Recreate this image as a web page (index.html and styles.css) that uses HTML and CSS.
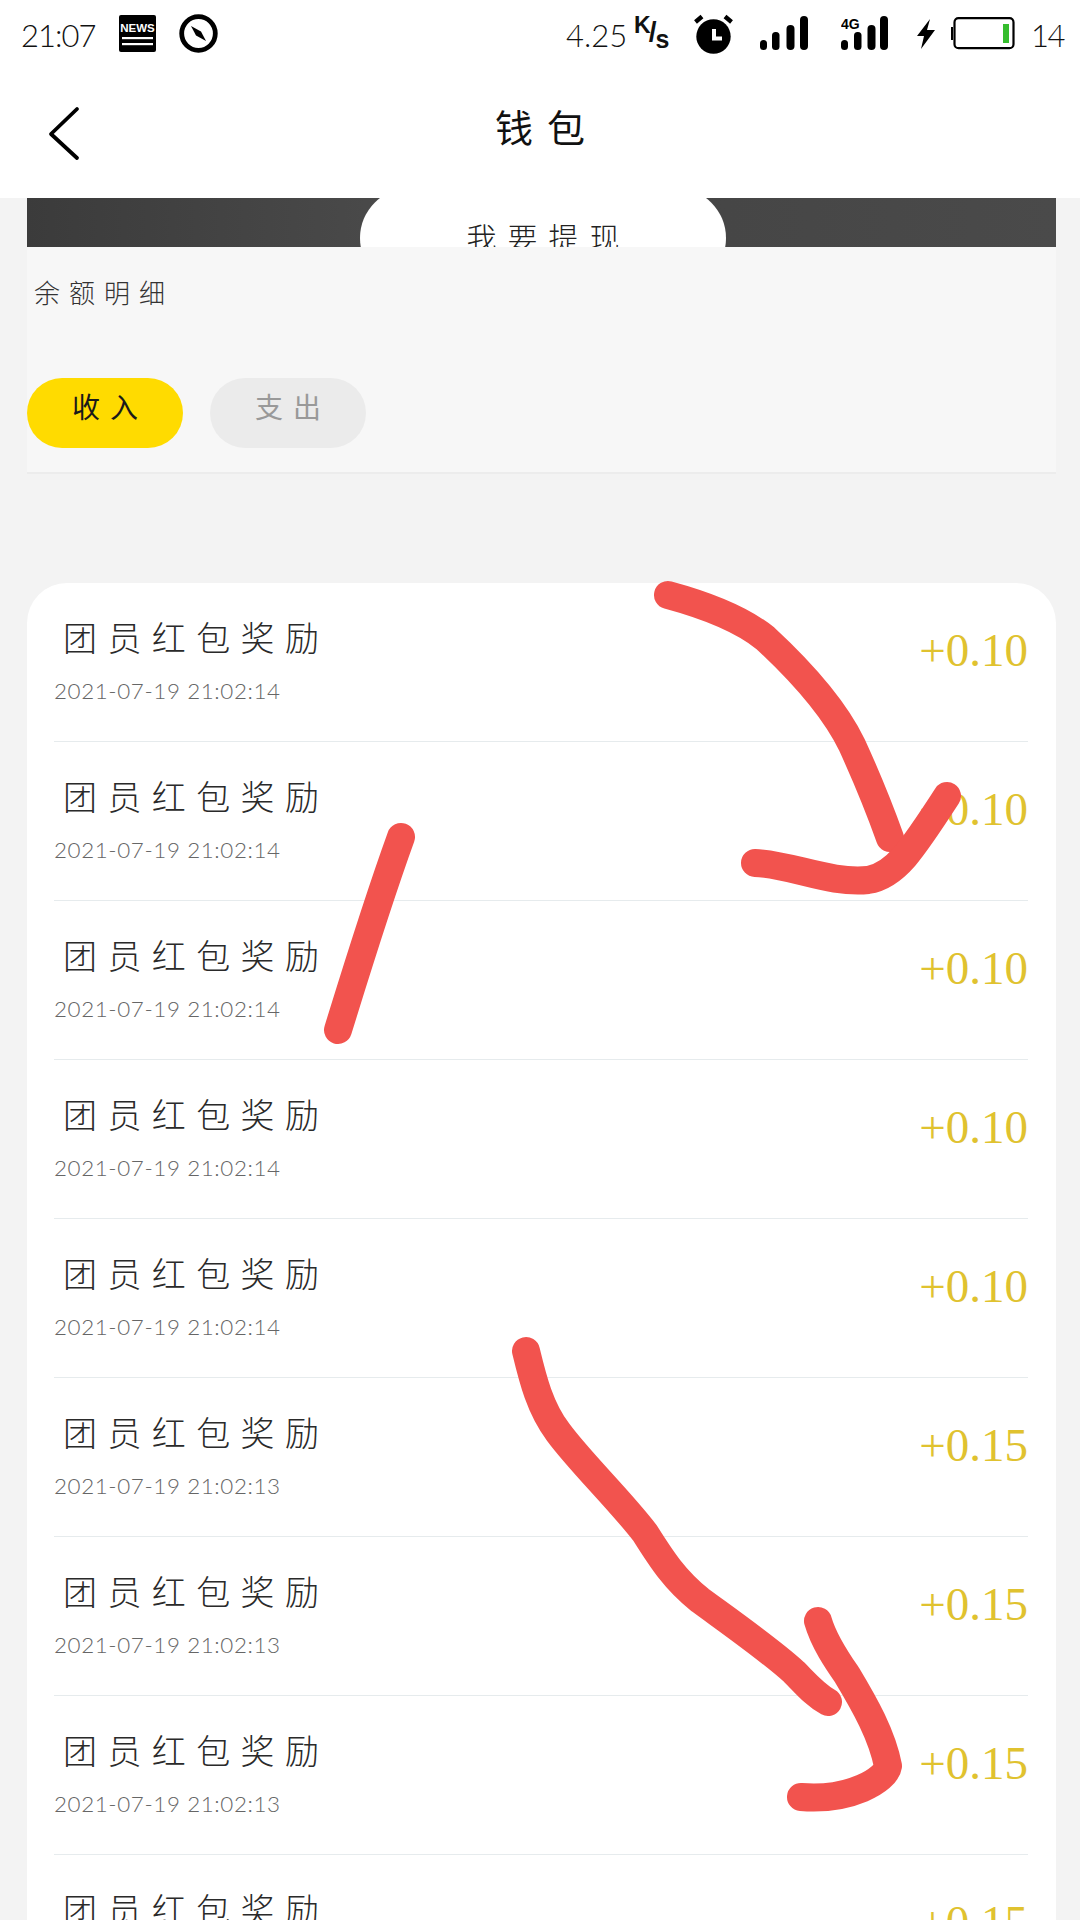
FILE: index.html
```html
<!DOCTYPE html>
<html lang="zh">
<head>
<meta charset="utf-8">
<title>钱包</title>
<link rel="stylesheet" href="styles.css">
</head>
<body>
<div class="page">
  <div class="top">
    <div class="status">
      <div class="status-left">
        <span class="time">21:07</span>
        <svg class="ic-news" viewBox="0 0 37 37"><rect width="37" height="37" rx="2" fill="#000"/><text x="18.5" y="17" class="news-text" text-anchor="middle">NEWS</text><rect x="3" y="22" width="31" height="2.2" fill="#fff"/><rect x="3" y="28" width="31" height="2.2" fill="#fff"/></svg>
        <svg class="ic-compass" viewBox="0 0 39 39"><circle cx="19.5" cy="19.5" r="16.8" fill="none" stroke="#000" stroke-width="4.8"/><path d="M12 12 L22 17.5 L27 27 L17 21.5 Z" fill="#000"/></svg>
      </div>
      <div class="status-right">
        <span class="speed">4.25</span>
        <span class="unit"><b class="unit-k">K</b><i class="unit-slash">/</i><b class="unit-s">s</b></span>
        <svg class="ic-alarm" viewBox="0 0 39 40"><circle cx="19.5" cy="22.5" r="17.2" fill="#000"/><path d="M20 15 V24.5 H28" fill="none" stroke="#fff" stroke-width="4"/><path d="M1.5 8 L8 2.5 M37.5 8 L31 2.5" stroke="#000" stroke-width="4.4"/></svg>
        <svg class="ic-signal" viewBox="0 0 48 34"><rect x="0" y="24" width="7" height="10" rx="3.5"/><rect x="12" y="16" width="7.5" height="18" rx="3.5"/><rect x="26.5" y="9" width="8" height="25" rx="4"/><rect x="40" y="0" width="8" height="34" rx="4"/></svg>
        <svg class="ic-4g" viewBox="0 0 47 34"><text x="0" y="13" class="g-text">4G</text><rect x="0" y="24" width="7" height="10" rx="3.5"/><rect x="13" y="16" width="7.5" height="18" rx="3.5"/><rect x="26.5" y="9" width="8" height="25" rx="4"/><rect x="39" y="0" width="8" height="34" rx="4"/></svg>
        <svg class="ic-bolt" viewBox="0 0 20 30"><path d="M14 0 L1 17 H8 L5 30 L19 11 H11 Z" fill="#000"/></svg>
        <svg class="ic-battery" viewBox="0 0 64 33"><rect x="3.5" y="1.2" width="59" height="30" rx="4" fill="#fff" stroke="#000" stroke-width="2.2"/><rect x="0" y="10" width="2" height="13" fill="#000"/><rect x="52" y="7" width="6" height="19" fill="#35bd2d"/></svg>
        <span class="batt-num">14</span>
      </div>
    </div>
    <div class="nav">
      <svg class="ic-back" viewBox="0 0 34 56"><path d="M30 3 L4 28 L30 52" fill="none" stroke="#000" stroke-width="3.8" stroke-linecap="round" stroke-linejoin="round"/></svg>
      <h1 class="title">钱包</h1>
    </div>
  </div>

  <div class="banner">
    <div class="withdraw">我要提现</div>
  </div>

  <div class="panel">
    <div class="panel-title">余额明细</div>
    <div class="tabs">
      <div class="tab tab-on">收入</div>
      <div class="tab tab-off">支出</div>
    </div>
  </div>

  <div class="card">
    <div class="row"><div class="info"><div class="name">团员红包奖励</div><div class="date">2021-07-19 21:02:14</div></div><div class="amount">+0.10</div></div>
    <div class="row"><div class="info"><div class="name">团员红包奖励</div><div class="date">2021-07-19 21:02:14</div></div><div class="amount">+0.10</div></div>
    <div class="row"><div class="info"><div class="name">团员红包奖励</div><div class="date">2021-07-19 21:02:14</div></div><div class="amount">+0.10</div></div>
    <div class="row"><div class="info"><div class="name">团员红包奖励</div><div class="date">2021-07-19 21:02:14</div></div><div class="amount">+0.10</div></div>
    <div class="row"><div class="info"><div class="name">团员红包奖励</div><div class="date">2021-07-19 21:02:14</div></div><div class="amount">+0.10</div></div>
    <div class="row"><div class="info"><div class="name">团员红包奖励</div><div class="date">2021-07-19 21:02:13</div></div><div class="amount">+0.15</div></div>
    <div class="row"><div class="info"><div class="name">团员红包奖励</div><div class="date">2021-07-19 21:02:13</div></div><div class="amount">+0.15</div></div>
    <div class="row"><div class="info"><div class="name">团员红包奖励</div><div class="date">2021-07-19 21:02:13</div></div><div class="amount">+0.15</div></div>
    <div class="row"><div class="info"><div class="name">团员红包奖励</div><div class="date">2021-07-19 21:02:13</div></div><div class="amount">+0.15</div></div>
  </div>

  <svg class="marks" viewBox="0 0 1080 1920">
    <path d="M668 595 C705 605 740 618 765 638 C805 675 835 710 852 745 C868 780 880 810 890 838"/>
    <path d="M755 863 C790 864 830 884 868 880 C895 876 912 850 947 796"/>
    <path d="M401 837 C380 895 358 965 338 1030"/>
    <path d="M526 1351 C533 1380 540 1408 558 1432 C580 1462 618 1498 645 1533 C662 1560 675 1580 700 1600 C730 1622 770 1650 794 1672 C805 1683 815 1695 828 1702"/>
    <path d="M818 1621 C824 1642 838 1662 847 1675 C865 1705 882 1735 888 1766 C886 1780 850 1801 801 1797"/>
  </svg>
</div>
</body>
</html>
```
FILE: styles.css
```css
* { box-sizing: border-box; }
html, body { margin: 0; padding: 0; }
body { background: #f3f3f3; font-family: "Noto Sans CJK SC", "Noto Sans", sans-serif; }
.page { position: relative; width: 1080px; height: 1920px; overflow: hidden; background: #f3f3f3; }

.top { background: #fff; height: 198px; }
.status { height: 70px; display: flex; justify-content: space-between; align-items: flex-start; padding: 14px 21px 0; }
.status-left, .status-right { display: flex; align-items: flex-start; }
.time, .speed, .batt-num { font-family: "Lato", sans-serif; font-weight: 300; font-size: 31px; line-height: 42px; color: #111; }
.time { width: 98px; letter-spacing: -1px; }
.speed { width: 60px; }
.ic-news { width: 37px; height: 37px; margin-top: 1px; }
.news-text { font: 700 11.5px "Liberation Sans", sans-serif; fill: #fff; }
.ic-compass { width: 39px; height: 39px; margin-left: 23px; }
.unit { display: flex; width: 37px; height: 40px; margin-left: 8px; color: #111; font-family: "Liberation Sans", sans-serif; }
.unit-k { font-size: 23px; line-height: 22px; font-weight: 700; }
.unit-slash { font-style: normal; font-weight: 700; font-size: 28px; line-height: 30px; margin-top: 3px; margin-left: -2px; }
.unit-s { font-size: 25px; line-height: 26px; font-weight: 700; margin-top: 12px; margin-left: -1px; }
.ic-alarm { width: 39px; height: 40px; margin-left: 23px; }
.ic-signal { width: 48px; height: 34px; margin-left: 27px; margin-top: 2px; fill: #000; }
.ic-4g { width: 47px; height: 34px; margin-left: 33px; margin-top: 2px; fill: #000; }
.g-text { font: 700 14px "Liberation Sans", sans-serif; }
.ic-bolt { width: 20px; height: 30px; margin-left: 28px; margin-top: 5px; }
.ic-battery { width: 64px; height: 33px; margin-left: 15px; margin-top: 3px; }
.batt-num { margin-left: 16px; width: 28px; letter-spacing: -1.5px; }

.nav { height: 128px; position: relative; display: flex; justify-content: center; padding-top: 28px; }
.ic-back { position: absolute; left: 47px; top: 36px; width: 34px; height: 56px; }
.title { margin: 0; font-size: 38px; line-height: 56px; font-weight: 400; letter-spacing: 14px; color: #111; padding-left: 14px; }

.banner { height: 49px; margin: 0 24px 0 27px; background: linear-gradient(90deg, #3b3b3b, #4c4c4c 40%, #454545 60%, #4a4a4a); display: flex; justify-content: center; overflow: hidden; }
.withdraw { width: 366px; height: 100px; margin: -10px 0 0 3px; flex: none; background: #fff; border-radius: 50px; text-align: center; font-size: 30px; line-height: 96px; letter-spacing: 11px; font-weight: 300; color: #222; padding-left: 11px; }

.panel { height: 227px; margin: 0 24px 0 27px; background: #f7f7f7; border-bottom: 2px solid #ececec; padding: 27px 0 0 7px; }
.panel-title { font-size: 26px; line-height: 36px; letter-spacing: 9px; font-weight: 300; color: #333; }
.tabs { display: flex; gap: 27px; margin: 68px 0 0 -7px; }
.tab { width: 156px; height: 70px; border-radius: 35px; text-align: center; font-size: 28px; line-height: 56px; letter-spacing: 10px; padding-left: 10px; }
.tab-on { background: #ffdb00; color: #1a1a1a; }
.tab-off { background: #ebebeb; color: #999; }

.card { margin: 109px 24px 0 27px; background: #fff; border-radius: 40px 40px 0 0; padding: 0 28px 0 27px; }
.row { height: 159px; display: flex; justify-content: space-between; align-items: flex-start; border-bottom: 1px solid #e6ebed; }
.info { padding-top: 30px; }
.name { font-size: 34px; line-height: 48px; letter-spacing: 10.4px; font-weight: 300; color: #2a2a2a; padding-left: 9px; }
.date { font-family: "Lato", sans-serif; font-size: 22.4px; line-height: 30px; font-weight: 300; letter-spacing: 0.6px; color: #666; margin-top: 15px; }
.amount { font-family: "Liberation Serif", serif; font-size: 47px; line-height: 56px; color: #e0c22f; margin-top: 39px; }

.marks { position: absolute; left: 0; top: 0; width: 1080px; height: 1920px; fill: none; stroke: #f2534e; stroke-width: 28; stroke-linecap: round; stroke-linejoin: round; }
```
